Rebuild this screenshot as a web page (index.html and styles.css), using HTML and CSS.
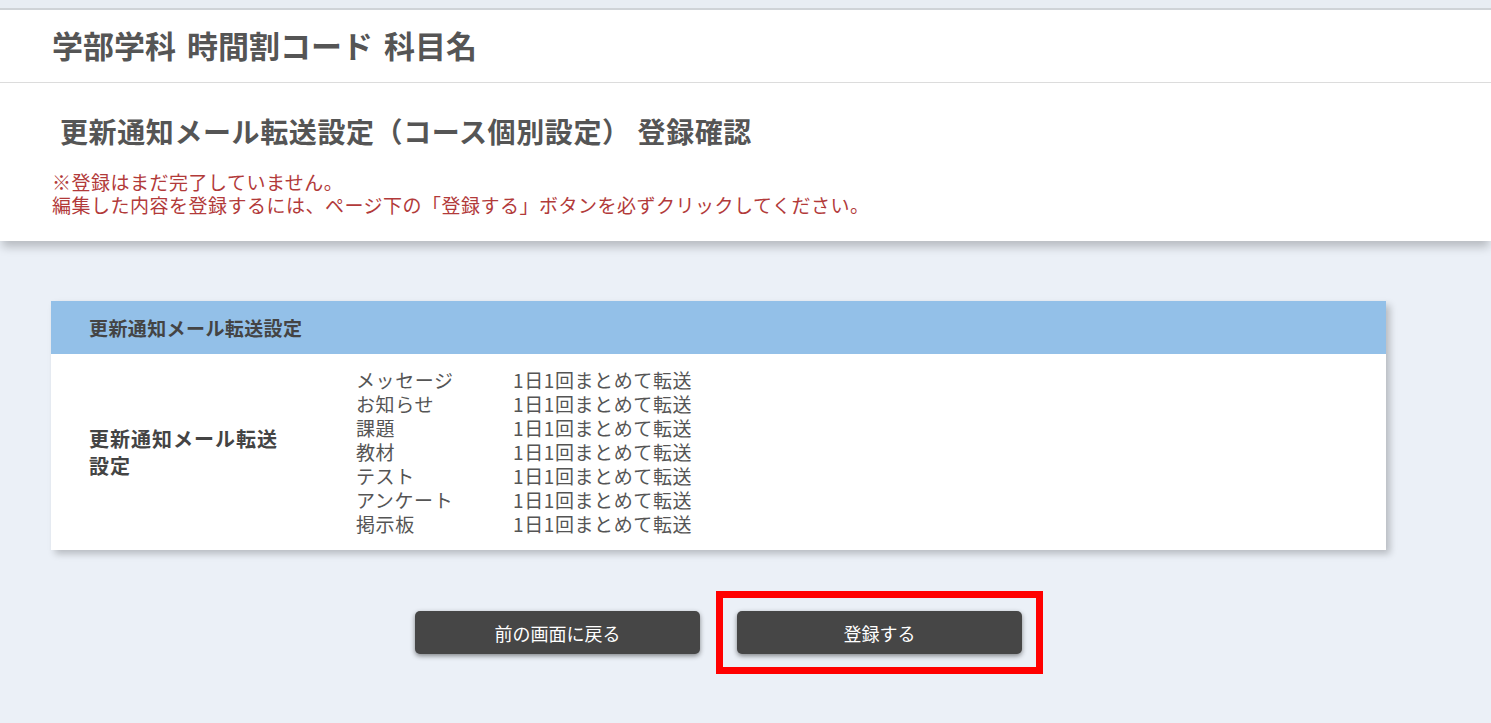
FILE: index.html
```html
<!DOCTYPE html>
<html lang="ja">
<head>
<meta charset="utf-8">
<title>登録確認</title>
<link rel="stylesheet" href="styles.css">
</head>
<body>
<div class="topstrip"></div>
<header class="course-header">
  <h1 class="course-title">学部学科 時間割コード 科目名</h1>
</header>
<section class="notice">
  <h2 class="page-title">更新通知メール転送設定（コース個別設定） 登録確認</h2>
  <p class="warn">※登録はまだ完了していません。<br>編集した内容を登録するには、ページ下の「登録する」ボタンを必ずクリックしてください。</p>
</section>
<main class="main">
  <div class="card">
    <div class="card-head">更新通知メール転送設定</div>
    <div class="card-body">
      <div class="label">更新通知メール転送設定</div>
      <div class="list">
        <span>メッセージ</span><span>1日1回まとめて転送</span>
        <span>お知らせ</span><span>1日1回まとめて転送</span>
        <span>課題</span><span>1日1回まとめて転送</span>
        <span>教材</span><span>1日1回まとめて転送</span>
        <span>テスト</span><span>1日1回まとめて転送</span>
        <span>アンケート</span><span>1日1回まとめて転送</span>
        <span>掲示板</span><span>1日1回まとめて転送</span>
      </div>
    </div>
  </div>
  <div class="actions">
    <button class="btn" type="button">前の画面に戻る</button>
    <div class="highlight"><button class="btn" type="button">登録する</button></div>
  </div>
</main>
</body>
</html>
```
FILE: styles.css
```css
* { box-sizing: border-box; }
html, body {
  margin: 0;
  padding: 0;
}
body {
  background: #ebf0f7;
  font-family: "Noto Sans CJK JP", "Noto Sans", sans-serif;
  color: #444;
  height: 723px;
  overflow: hidden;
}
.topstrip {
  height: 10px;
  background: #e8edf3;
  border-bottom: 2px solid #cfd3d7;
}
.course-header {
  background: #fff;
  height: 73px;
  border-bottom: 1px solid #dcdcdc;
  display: flex;
  align-items: center;
  padding-left: 52px;
}
.course-title {
  margin: 0;
  font-size: 31px;
  font-weight: 700;
  color: #555;
  line-height: 1;
  padding-bottom: 3px;
  word-spacing: 4px;
}
.notice {
  background: #fff;
  height: 158px;
  box-shadow: 0 8px 9px -2px rgba(0, 0, 0, 0.22);
  padding-top: 30px;
  position: relative;
}
.page-title {
  margin: 0 0 0 60px;
  font-size: 28px;
  font-weight: 700;
  color: #555;
  line-height: 36px;
  letter-spacing: 0.6px;
}
.warn {
  margin: 21px 0 0 52px;
  font-size: 19px;
  line-height: 23px;
  color: #b23a3a;
  letter-spacing: 0.5px;
}
.main {
  padding-top: 60px;
}
.card {
  margin-left: 51px;
  width: 1335px;
  background: #fff;
  box-shadow: 4px 4px 7px rgba(0, 0, 0, 0.22);
}
.card-head {
  height: 53px;
  background: #93c0e8;
  display: flex;
  align-items: center;
  padding-left: 38px;
  font-size: 19px;
  font-weight: 700;
  color: #444;
  letter-spacing: 0.4px;
}
.card-body {
  display: grid;
  grid-template-columns: 267px auto;
  align-items: center;
  padding: 14px 0 14px 38px;
  min-height: 196px;
}
.label {
  width: 200px;
  font-size: 20px;
  font-weight: 700;
  line-height: 27px;
  letter-spacing: 1px;
  color: #444;
}
.list {
  display: grid;
  grid-template-columns: 157px auto;
  font-size: 19px;
  line-height: 24px;
  letter-spacing: 0.6px;
  color: #555;
}
.actions {
  width: 1335px;
  margin-left: 51px;
  margin-top: 61px;
  display: flex;
  justify-content: center;
  gap: 37px;
}
.btn {
  width: 285px;
  height: 43px;
  border: none;
  border-radius: 5px;
  background: #464646;
  color: #fff;
  font-family: "Noto Sans CJK JP", "Noto Sans", sans-serif;
  font-size: 18px;
  box-shadow: 0 2px 5px rgba(0, 0, 0, 0.45);
  cursor: pointer;
}
.highlight {
  position: relative;
}
.highlight::after {
  content: "";
  position: absolute;
  top: -20px;
  bottom: -20px;
  left: -21px;
  right: -21px;
  border: 7px solid #ff0000;
  pointer-events: none;
}
```
